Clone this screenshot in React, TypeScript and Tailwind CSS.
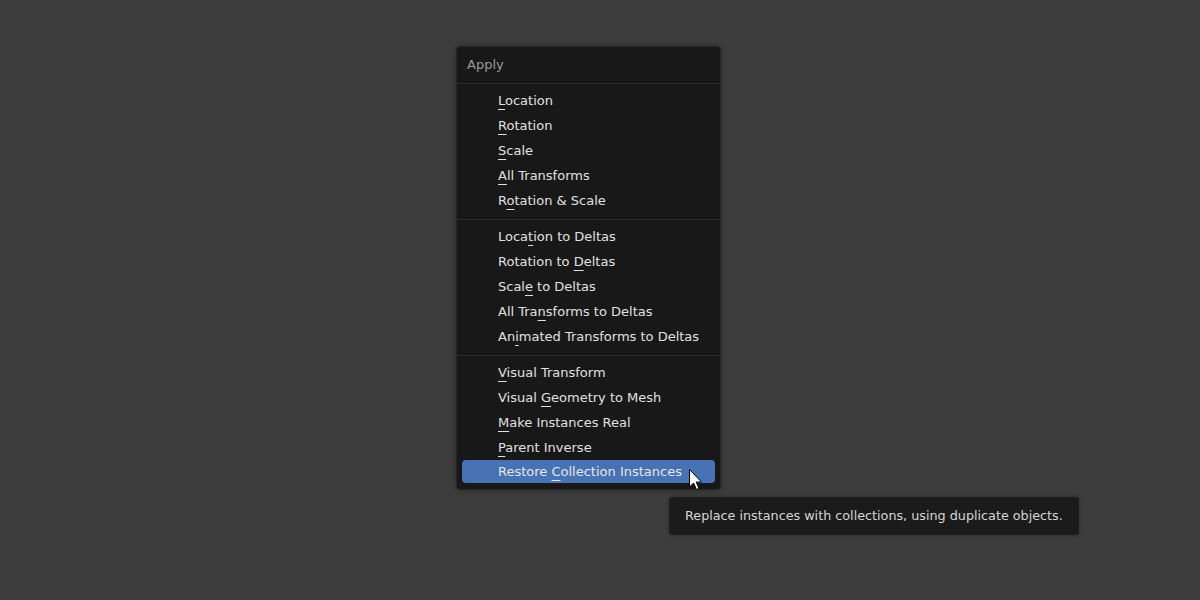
import React from "react";

type Item = { pre: string; key: string; post: string };

const groups: Item[][] = [
  [
    { pre: "", key: "L", post: "ocation" },
    { pre: "", key: "R", post: "otation" },
    { pre: "", key: "S", post: "cale" },
    { pre: "", key: "A", post: "ll Transforms" },
    { pre: "R", key: "o", post: "tation & Scale" },
  ],
  [
    { pre: "Loca", key: "t", post: "ion to Deltas" },
    { pre: "Rotation to ", key: "D", post: "eltas" },
    { pre: "Scal", key: "e", post: " to Deltas" },
    { pre: "All Tra", key: "n", post: "sforms to Deltas" },
    { pre: "An", key: "i", post: "mated Transforms to Deltas" },
  ],
  [
    { pre: "", key: "V", post: "isual Transform" },
    { pre: "Visual ", key: "G", post: "eometry to Mesh" },
    { pre: "", key: "M", post: "ake Instances Real" },
    { pre: "", key: "P", post: "arent Inverse" },
    { pre: "Restore ", key: "C", post: "ollection Instances" },
  ],
];

function Row({ item, active }: { item: Item; active?: boolean }) {
  return (
    <div
      className={
        "mx-[5px] flex items-center pl-[36px] rounded-[4px] " +
        (active ? "bg-[#4772b3] h-[23px] mb-[2px] text-[#e6e6e6]" : "h-[25px] text-[#e0e0e0]")
      }
    >
      <span className="whitespace-pre">
        {item.pre}
        <span className="underline underline-offset-[4px] decoration-[1px]">{item.key}</span>
        {item.post}
      </span>
    </div>
  );
}

export default function App() {
  return (
    <div
      className="relative w-[1200px] h-[600px] bg-[#3d3d3d] overflow-hidden text-[13px]"
      style={{ fontFamily: '"DejaVu Sans", sans-serif' }}
    >
      <div className="absolute left-[456px] top-[46px] w-[265px] h-[444px] bg-[#181818] rounded-[4px] border border-[#262626] shadow-[0_0_6px_rgba(0,0,0,0.35)] flex flex-col">
        <div className="h-[37px] flex items-center pl-[10px] text-[#9a9a9a] border-b border-[#2e2e2e]">
          Apply
        </div>
        <div className="pt-[4px] flex flex-col">
          {groups.map((g, gi) => (
            <div key={gi} className="flex flex-col">
              {gi > 0 && (
                <div className="pt-[6px] pb-[4px]">
                  <div className="w-full h-px bg-[#2e2e2e]" />
                </div>
              )}
              {g.map((it, ii) => (
                <Row key={ii} item={it} active={gi === 2 && ii === 4} />
              ))}
            </div>
          ))}
        </div>
      </div>

      <svg
        className="absolute left-[688px] top-[468px]"
        width="16"
        height="24"
        viewBox="0 0 16 24"
      >
        <path
          d="M1.5 1.5 L1.5 19 L5.5 15 L8.5 21.5 L11 20.4 L8.2 14 L13.5 14 Z"
          fill="#ffffff"
          stroke="#000000"
          strokeWidth="1"
          strokeLinejoin="round"
        />
      </svg>

      <div className="absolute left-[669px] top-[497px] w-[410px] h-[38px] bg-[#1b1b1b] rounded-[4px] flex items-center pl-[16px] text-[#d6d6d6] text-[12.75px] shadow-[0_0_4px_rgba(0,0,0,0.3)]">
        Replace instances with collections, using duplicate objects.
      </div>
    </div>
  );
}
